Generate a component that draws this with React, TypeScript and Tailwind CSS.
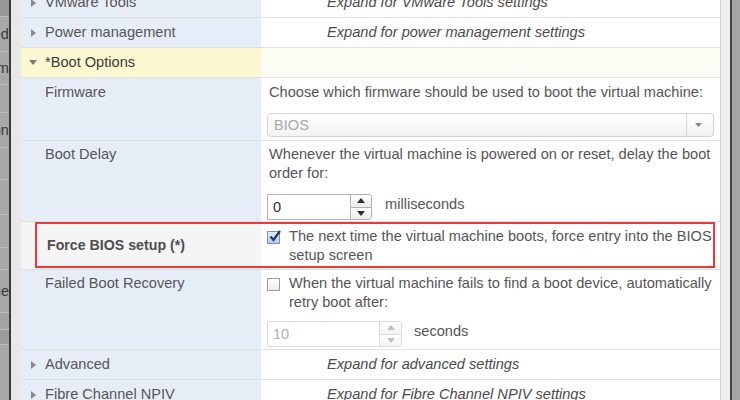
import React from "react";

const Tri = ({ down }: { down?: boolean }) =>
  down ? (
    <svg width="8" height="5" viewBox="0 0 8 5" className="shrink-0">
      <path d="M0 0 L8 0 L4 5 Z" fill="#7a7a7a" />
    </svg>
  ) : (
    <svg width="5" height="8" viewBox="0 0 5 8" className="shrink-0">
      <path d="M0 0 L5 4 L0 8 Z" fill="#8a8a8a" />
    </svg>
  );

const SmallTri = ({ up, color }: { up?: boolean; color: string }) => (
  <svg width="8" height="5" viewBox="0 0 8 5">
    {up ? <path d="M0 5 L8 5 L4 0 Z" fill={color} /> : <path d="M0 0 L8 0 L4 5 Z" fill={color} />}
  </svg>
);

const Spinner = ({
  value,
  inputW,
  disabled,
}: {
  value: string;
  inputW: string;
  disabled?: boolean;
}) => (
  <div className="flex h-[26px]">
    <div
      className={
        disabled
          ? `${inputW} h-full border border-[#dcdcdc] bg-white flex items-center pl-[5px] text-[#b0b0b0]`
          : `${inputW} h-full border border-[#b5b5b5] bg-white flex items-center pl-[5px] text-[#2a2a3a]`
      }
    >
      {value}
    </div>
    <div
      className={
        disabled
          ? "w-[22px] h-full flex flex-col border border-l-0 border-[#dcdcdc] rounded-r-[4px] overflow-hidden"
          : "w-[21px] h-full flex flex-col border border-l-0 border-[#b0b0b0] rounded-r-[4px] overflow-hidden"
      }
    >
      <div
        className={
          disabled
            ? "flex-1 flex items-center justify-center bg-gradient-to-b from-white to-[#f3f3f3] border-b border-[#dcdcdc]"
            : "flex-1 flex items-center justify-center bg-gradient-to-b from-white to-[#ececec] border-b border-[#b0b0b0]"
        }
      >
        <SmallTri up color={disabled ? "#c0c0c0" : "#2e2e2e"} />
      </div>
      <div
        className={
          disabled
            ? "flex-1 flex items-center justify-center bg-gradient-to-b from-white to-[#f3f3f3]"
            : "flex-1 flex items-center justify-center bg-gradient-to-b from-white to-[#ececec]"
        }
      >
        <SmallTri color={disabled ? "#c0c0c0" : "#2e2e2e"} />
      </div>
    </div>
  </div>
);

const Checkbox = ({ checked }: { checked?: boolean }) =>
  checked ? (
    <div className="relative w-[13px] h-[13px] shrink-0 border border-[#7f93ad] bg-gradient-to-b from-[#e4eefb] to-[#b3cbea]">
      <svg width="14" height="14" viewBox="0 0 14 14" className="absolute -top-[3px] left-0">
        <path d="M2.5 7.5 L5.5 11 L12 2" stroke="#1e3a66" strokeWidth="2.2" fill="none" />
      </svg>
    </div>
  ) : (
    <div className="w-[13px] h-[13px] shrink-0 border border-[#9d9d9d] bg-gradient-to-b from-white to-[#ececec]" />
  );

const LeftStrip = () => {
  const rows: { h: string; t?: string; bg: string }[] = [
    { h: "h-[17px]", bg: "bg-[#979797]" },
    { h: "h-[35px]", t: "Used", bg: "bg-[#a8a8a8]" },
    { h: "h-[33px]", t: "System", bg: "bg-[#a8a8a8]" },
    { h: "h-[28px]", bg: "bg-[#a8a8a8]" },
    { h: "h-[35px]", t: "Version", bg: "bg-[#a8a8a8]" },
    { h: "h-[32px]", bg: "bg-[#a8a8a8]" },
    { h: "h-[35px]", bg: "bg-[#a8a8a8]" },
    { h: "h-[33px]", bg: "bg-[#a8a8a8]" },
    { h: "h-[22px]", bg: "bg-[#a8a8a8]" },
    { h: "h-[43px]", t: "Cache", bg: "bg-[#a8a8a8]" },
    { h: "h-[17px]", bg: "bg-[#a3a3a3]" },
    { h: "h-[15px]", bg: "bg-[#9c9c9c]" },
    { h: "h-[60px]", bg: "bg-[#a8a8a8]" },
  ];
  return (
    <div className="w-[9px] shrink-0 flex flex-col overflow-hidden">
      {rows.map((r, i) => (
        <div
          key={i}
          className={`${r.h} ${r.bg} shrink-0 border-b border-[#bdbdbd] flex items-center justify-end overflow-hidden text-[#3a3a3a]`}
        >
          {r.t ? <span className="whitespace-nowrap">{r.t}</span> : null}
        </div>
      ))}
    </div>
  );
};

export default function App() {
  return (
    <div className="w-[740px] h-[400px] overflow-hidden flex bg-[#a6a6a6] font-['Liberation_Sans',Arial,sans-serif] text-[14.6px] leading-[19px]">
      <LeftStrip />
      <div className="w-[2px] shrink-0 bg-[#3a3a3a]" />
      <div className="w-[10px] shrink-0 bg-[#e8e8e8]" />
      <div className="w-[699px] shrink-0 bg-white flex flex-col">
        {/* VMware Tools */}
        <div className="-mt-[12px] h-[30px] shrink-0 grid grid-cols-[240px_1fr] border-b border-[#e0e0e0]">
          <div className="bg-[#e7edf6] flex items-center pl-[10px] gap-[9px] text-[#565656]">
            <Tri />
            <span>VMware Tools</span>
          </div>
          <div className="flex items-center pl-[66px] italic text-[#4a4a4a]">Expand for VMware Tools settings</div>
        </div>
        {/* Power management */}
        <div className="h-[30px] shrink-0 grid grid-cols-[240px_1fr] border-b border-[#e0e0e0]">
          <div className="bg-[#e7edf6] flex items-center pl-[10px] gap-[9px] text-[#565656]">
            <Tri />
            <span>Power management</span>
          </div>
          <div className="flex items-center pl-[66px] italic text-[#4a4a4a]">Expand for power management settings</div>
        </div>
        {/* Boot Options */}
        <div className="h-[30px] shrink-0 grid grid-cols-[240px_1fr] border-b border-[#e0e0e0]">
          <div className="bg-[#fcf9d2] flex items-center pl-[8px] gap-[8px] text-[#3a3a3a]">
            <Tri down />
            <span>*Boot Options</span>
          </div>
          <div className="bg-[#fcfbf4]" />
        </div>
        {/* Firmware */}
        <div className="h-[63px] shrink-0 grid grid-cols-[240px_1fr] border-b border-[#e0e0e0]">
          <div className="bg-[#e7edf6] pl-[24px] pt-[4px] leading-[20px] text-[#565656]">Firmware</div>
          <div className="pl-[6px] pt-[4px] flex flex-col">
            <div className="pl-[2px] leading-[20px] text-[#555555]">
              Choose which firmware should be used to boot the virtual machine:
            </div>
            <div className="mt-[11px] w-[447px] h-[24px] rounded-[4px] border border-[#d2d2d2] bg-gradient-to-b from-white to-[#f2f2f2] flex items-center">
              <span className="flex-1 pl-[6px] text-[#a8a8a8]">BIOS</span>
              <div className="w-[1px] h-[22px] bg-[#d6d6d6]" />
              <div className="w-[26px] flex items-center justify-center pr-[3px]">
                <svg width="7" height="4" viewBox="0 0 7 4">
                  <path d="M0 0 L7 0 L3.5 4 Z" fill="#8a8a8a" />
                </svg>
              </div>
            </div>
          </div>
        </div>
        {/* Boot Delay */}
        <div className="h-[81px] shrink-0 grid grid-cols-[240px_1fr] border-b border-[#e0e0e0]">
          <div className="bg-[#e7edf6] pl-[24px] pt-[4px] text-[#565656]">Boot Delay</div>
          <div className="pl-[6px] pr-[6px] pt-[4px] flex flex-col">
            <div className="pl-[2px] text-[#555555]">
              Whenever the virtual machine is powered on or reset, delay the boot order for:
            </div>
            <div className="mt-[11px] flex items-center gap-[13px]">
              <Spinner value="0" inputW="w-[84px]" />
              <span className="pb-[5px] text-[#555555]">milliseconds</span>
            </div>
          </div>
        </div>
        {/* Force BIOS setup */}
        <div className="relative h-[48px] shrink-0 grid grid-cols-[240px_1fr] border-b border-[#e0e0e0]">
          <div className="bg-[#f5f5f5] pl-[26px] flex items-center font-bold text-[14.2px] text-[#4e4e4e]">
            Force BIOS setup (*)
          </div>
          <div className="pl-[6px] pr-[6px] pt-[5px] flex gap-[9px]">
            <div className="mt-[4px]">
              <Checkbox checked />
            </div>
            <div className="text-[#555555]">
              The next time the virtual machine boots, force entry into the BIOS setup screen
            </div>
          </div>
          <div className="absolute left-[14px] right-[5px] top-0 bottom-[1px] border-2 border-[#ee3838] pointer-events-none" />
        </div>
        {/* Failed Boot Recovery */}
        <div className="h-[80px] shrink-0 grid grid-cols-[240px_1fr] border-b border-[#e0e0e0]">
          <div className="bg-[#e7edf6] pl-[24px] pt-[4px] text-[#565656]">Failed Boot Recovery</div>
          <div className="pl-[6px] pr-[6px] pt-[4px] flex flex-col">
            <div className="flex gap-[9px]">
              <div className="mt-[4px]">
                <Checkbox />
              </div>
              <div className="text-[#555555]">
                When the virtual machine fails to find a boot device, automatically retry boot after:
              </div>
            </div>
            <div className="mt-[9px] flex items-center gap-[12px]">
              <Spinner value="10" inputW="w-[113px]" disabled />
              <span className="pb-[6px] text-[#555555]">seconds</span>
            </div>
          </div>
        </div>
        {/* Advanced */}
        <div className="h-[30px] shrink-0 grid grid-cols-[240px_1fr] border-b border-[#e0e0e0]">
          <div className="bg-[#e7edf6] flex items-center pl-[10px] gap-[9px] text-[#565656]">
            <Tri />
            <span>Advanced</span>
          </div>
          <div className="flex items-center pl-[66px] italic text-[#4a4a4a]">Expand for advanced settings</div>
        </div>
        {/* Fibre Channel NPIV */}
        <div className="h-[30px] shrink-0 grid grid-cols-[240px_1fr] border-b border-[#e0e0e0]">
          <div className="bg-[#e7edf6] flex items-center pl-[10px] gap-[9px] text-[#565656]">
            <Tri />
            <span>Fibre Channel NPIV</span>
          </div>
          <div className="flex items-center pl-[66px] italic text-[#4a4a4a]">Expand for Fibre Channel NPIV settings</div>
        </div>
      </div>
      <div className="w-[1px] shrink-0 bg-[#cfcfcf]" />
      <div className="w-[9px] shrink-0 bg-[#efefef]" />
      <div className="w-[2px] shrink-0 bg-[#444444]" />
      <div className="flex-1 bg-[#a5a5a5]" />
    </div>
  );
}
